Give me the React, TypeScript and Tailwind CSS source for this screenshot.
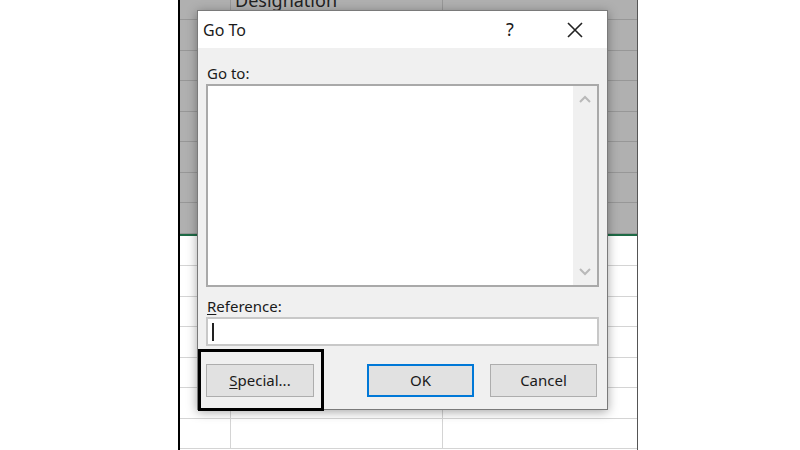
const greyRows = [20, 31, 30, 31, 30, 31, 30, 31];
const whiteRows = [30, 31, 30, 31, 30, 31, 30];

function Row({ h, grey, first }: { h: number; grey: boolean; first?: boolean }) {
  const line = grey ? "border-[#979797]" : "border-[#d4d4d4]";
  return (
    <div className={`flex border-b ${line}`} style={{ height: h }}>
      <div className={`w-[51px] border-r ${line}`} />
      <div className={`w-[212px] border-r ${line} overflow-hidden`}>
        {first && (
          <div className="pl-[4px] -mt-[9px] text-[18px] leading-none text-[#222]">Designation</div>
        )}
      </div>
      <div className="flex-1" />
    </div>
  );
}

function Chevron({ up }: { up?: boolean }) {
  return (
    <svg width="12" height="8" viewBox="0 0 12 8" className="text-[#b9b9b9]">
      <polyline
        points={up ? "1,7 6,2 11,7" : "1,1 6,6 11,1"}
        fill="none"
        stroke="currentColor"
        strokeWidth="2"
      />
    </svg>
  );
}

export default function App() {
  return (
    <main
      className="w-[800px] h-[450px] bg-white relative overflow-hidden pl-[178px]"
      style={{ fontFamily: '"Noto Sans", "Open Sans", sans-serif' }}
    >
      <div className="w-[460px] h-[450px] border-l-2 border-black border-r border-r-[#555] flex flex-col">
        <div className="bg-[#b0b0b0] flex flex-col">
          {greyRows.map((h, i) => (
            <Row key={i} h={h} grey first={i === 0} />
          ))}
        </div>
        <div className="h-[2px] bg-[#1e6b46]" />
        <div className="flex-1 bg-white flex flex-col">
          {whiteRows.map((h, i) => (
            <Row key={i} h={h} grey={false} />
          ))}
        </div>
      </div>

      <div className="absolute left-[197px] top-[10px] w-[411px] h-[400px] border border-[#7a7a7a] bg-[#f0f0f0] shadow-[0_2px_10px_rgba(0,0,0,0.35)] flex flex-col">
        <div className="h-[37px] bg-white flex items-center pl-[5px] text-[#1a1a1a]">
          <span className="text-[16px]">Go To</span>
          <span className="ml-auto text-[18px] w-[20px] text-center">?</span>
          <svg width="16" height="16" viewBox="0 0 16 16" className="ml-[47px] mr-[24px]">
            <path d="M1 1L15 15M15 1L1 15" stroke="#222" strokeWidth="1.6" />
          </svg>
        </div>

        <div className="flex flex-col px-[8px] text-[15px] text-[#1a1a1a]">
          <div className="h-[36px] flex items-end pb-[3px] pl-[1px] leading-none">Go to:</div>
          <div className="h-[203px] border-2 border-[#a9a9a9] bg-white flex">
            <div className="flex-1" />
            <div className="w-[24px] bg-[#f0f0f0] flex flex-col items-center justify-between py-[9px]">
              <Chevron up />
              <Chevron />
            </div>
          </div>
          <div className="h-[30px] flex items-end pb-[3px] pl-[1px] leading-none">
            <span>
              <span className="underline underline-offset-2">R</span>eference:
            </span>
          </div>
          <div className="h-[29px] border-2 border-[#c8c8c8] bg-white flex items-center pl-[4px]">
            <div className="w-[2px] h-[18px] bg-[#222]" />
          </div>
          <div className="flex mt-[18px] gap-[16px]">
            <button className="w-[108px] h-[33px] bg-[#e1e1e1] border border-[#adadad] text-[15px]">
              <span className="underline underline-offset-2">S</span>pecial...
            </button>
            <button className="ml-[37px] w-[107px] h-[33px] bg-[#e1e1e1] border-2 border-[#0078d7] text-[15px]">
              OK
            </button>
            <button className="w-[107px] h-[33px] bg-[#e1e1e1] border border-[#adadad] text-[15px]">
              Cancel
            </button>
          </div>
        </div>

        <div className="absolute left-0 top-[338px] w-[126px] h-[62px] border-[3px] border-black" />
      </div>
    </main>
  );
}
